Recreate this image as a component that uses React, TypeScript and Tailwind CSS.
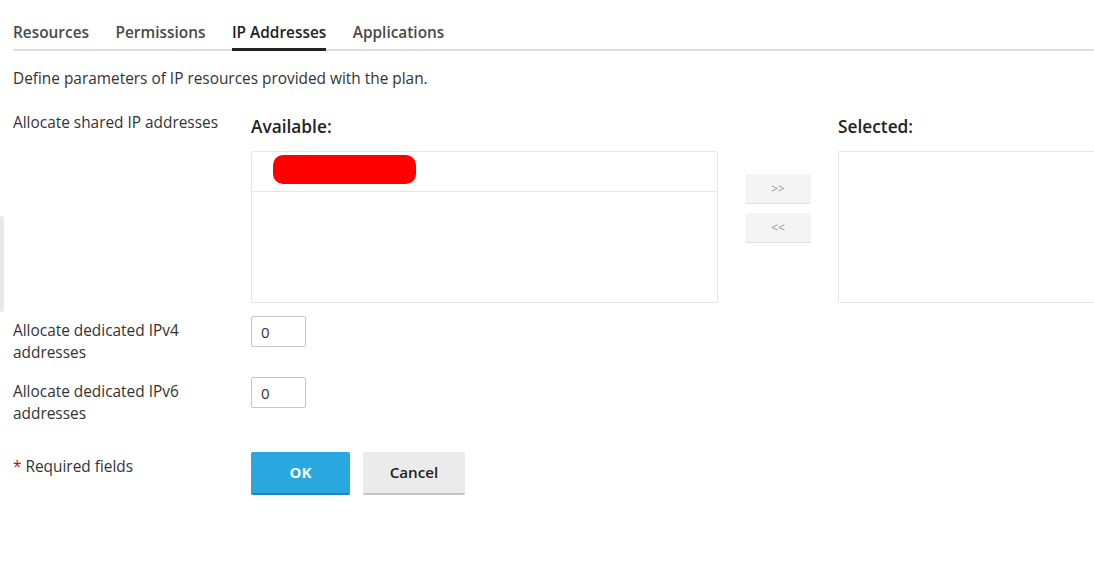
import React from "react";

const tabs = ["Resources", "Permissions", "IP Addresses", "Applications"];

function Label({ children }: { children: React.ReactNode }) {
  return <div className="w-[238px] shrink-0 pr-4 pt-[4px] text-[15.4px] leading-[22px] text-[#333]">{children}</div>;
}

function NumberField({ value }: { value: string }) {
  return (
    <input
      defaultValue={value}
      className="h-[31px] w-[55px] rounded-[2px] border border-[#c6c6c6] bg-white px-[9px] text-[15px] text-[#333] outline-none"
    />
  );
}

export default function App() {
  return (
    <div className="relative h-[572px] w-[1094px] overflow-hidden bg-white font-['Open_Sans',sans-serif] text-[#333]">
      {/* scrolled-off sidebar edge */}
      <div className="absolute left-0 top-[216px] h-[96px] w-[4px] rounded-r-[3px] bg-[#e8e8e8]" />

      <div className="pl-[13px] pt-[22px]">
        <div className="flex gap-[26.5px] border-b-2 border-[#dddddd]">
          {tabs.map((t) => (
            <div
              key={t}
              className={
                "relative pb-[5px] text-[15.4px] leading-[22px] font-semibold " +
                (t === "IP Addresses" ? "text-[#222]" : "text-[#4a4a4a]")
              }
            >
              {t}
              {t === "IP Addresses" && <div className="absolute -bottom-[2px] left-0 right-0 h-[3px] bg-[#222]" />}
            </div>
          ))}
        </div>

        <p className="mt-[17px] text-[15.4px] leading-[22px]">Define parameters of IP resources provided with the plan.</p>

        <div className="mt-[21px] flex">
          <div className="w-[238px] shrink-0 pr-4 pt-[1px] text-[15.4px] leading-[22px]">Allocate shared IP addresses</div>
          <div className="flex">
            <div className="w-[467px]">
              <div className="pt-[5px] text-[17.3px] leading-[22px] font-semibold text-[#222]">Available:</div>
              <div className="mt-[13px] h-[152px] rounded-[2px] border border-[#e6e6e6]">
                <div className="h-[40px] border-b border-[#e6e6e6] pl-[21px] pt-[3px]">
                  <div className="h-[29px] w-[143px] rounded-[10px] bg-[#ff0000]" />
                </div>
              </div>
            </div>
            <div className="flex w-[120px] flex-col items-center gap-[9px] pt-[63px]">
              <button className="h-[30px] w-[66px] rounded-[2px] border-b border-[#dedede] bg-[#f4f4f4] text-[12px] text-[#999]">&gt;&gt;</button>
              <button className="h-[30px] w-[66px] rounded-[2px] border-b border-[#dedede] bg-[#f4f4f4] text-[12px] text-[#999]">&lt;&lt;</button>
            </div>
            <div className="w-[300px]">
              <div className="pt-[5px] text-[17.3px] leading-[22px] font-semibold text-[#222]">Selected:</div>
              <div className="mt-[13px] h-[152px] rounded-[2px] border border-[#e6e6e6]" />
            </div>
          </div>
        </div>

        <div className="mt-[13px] flex">
          <Label>Allocate dedicated IPv4 addresses</Label>
          <NumberField value="0" />
        </div>

        <div className="mt-[13px] flex">
          <Label>Allocate dedicated IPv6 addresses</Label>
          <NumberField value="0" />
        </div>

        <div className="mt-[27px] flex">
          <div className="w-[238px] shrink-0 pt-[4px] text-[15.4px] leading-[22px]">
            <span className="text-[#a31515]">*</span> Required fields
          </div>
          <div className="flex gap-[13px]">
            <button className="h-[43px] w-[99px] rounded-[2px] border-b-2 border-[#1d86b8] bg-[#29a8df] text-[15px] font-bold text-white">OK</button>
            <button className="h-[43px] w-[102px] rounded-[2px] border-b-2 border-[#c4c4c4] bg-[#ebebeb] text-[15.2px] font-semibold text-[#222]">Cancel</button>
          </div>
        </div>
      </div>
    </div>
  );
}
